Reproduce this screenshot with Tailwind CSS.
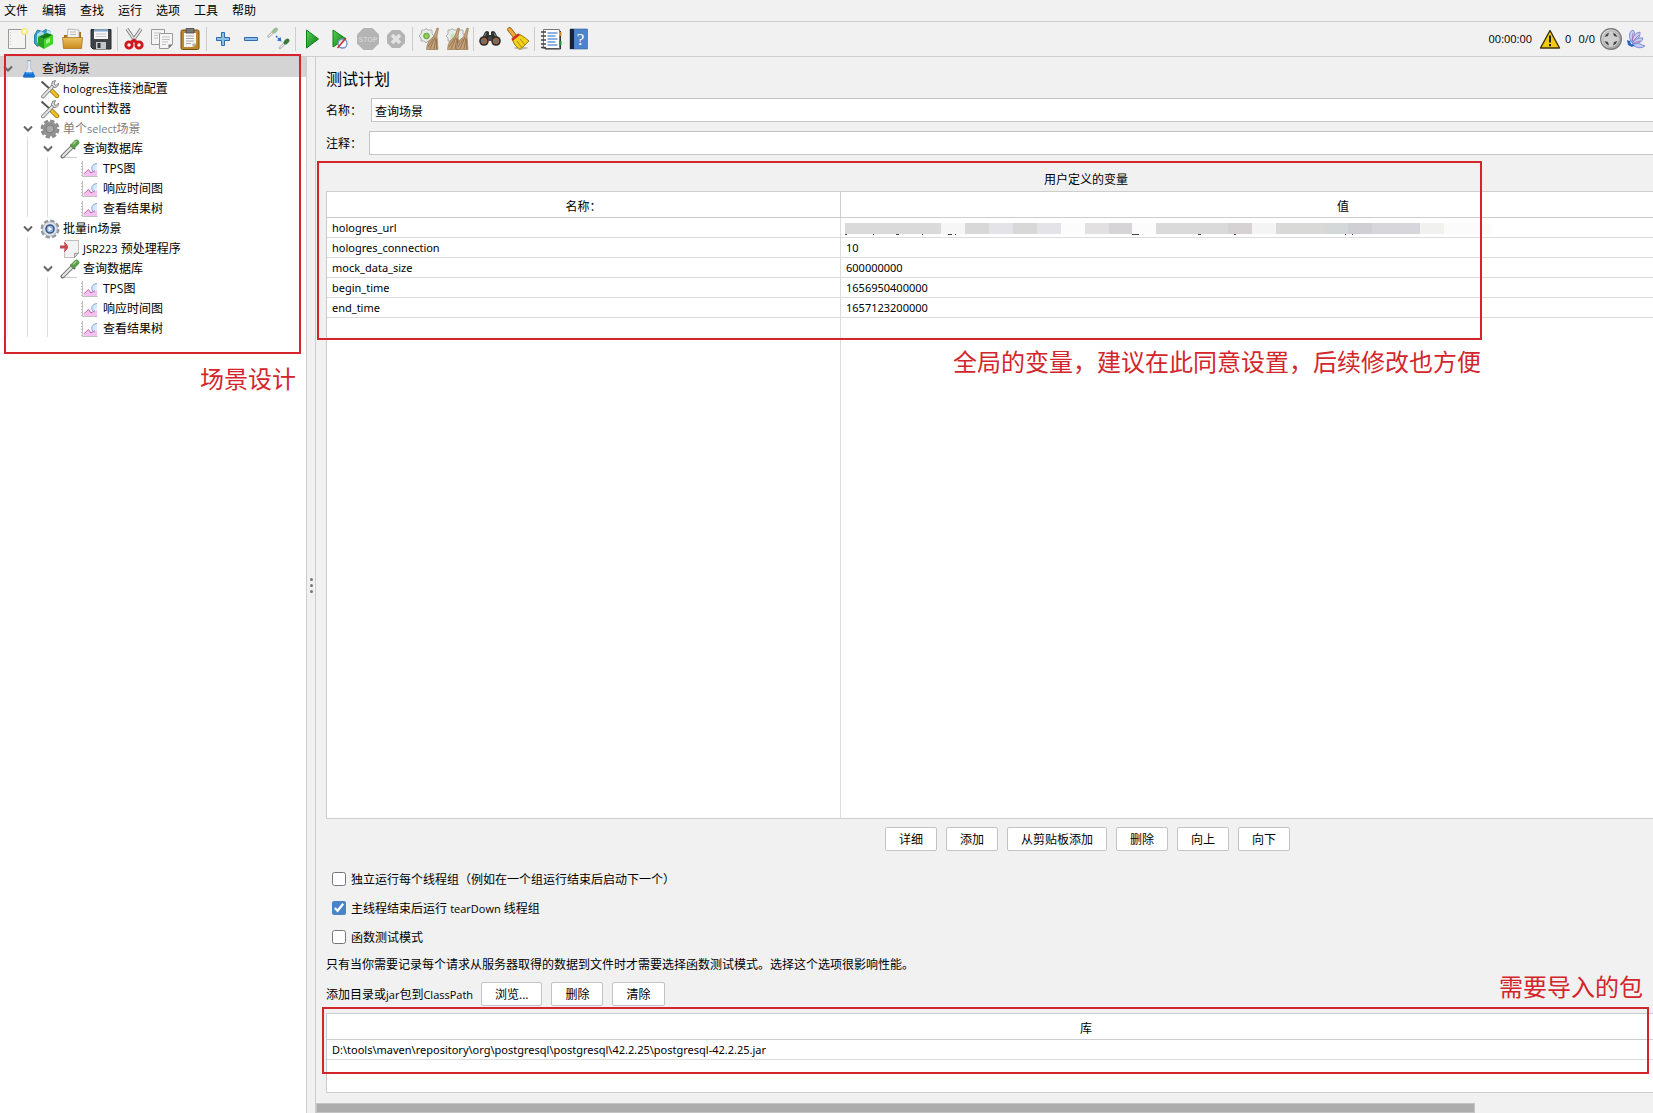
<!DOCTYPE html>
<html lang="zh-CN">
<head>
  <meta charset="UTF-8" />
  <title>查询场景</title>
  <script src="https://cdn.jsdelivr.net/npm/@tailwindcss/browser@4"></script>
</head>
<body class="flex flex-col h-screen overflow-hidden bg-[#f1f1f1] text-black text-[12px] leading-5 font-['Open_Sans','Noto_Sans_CJK_SC',sans-serif]">

  <!-- Icon sprite -->
  <svg class="absolute size-0">
    <defs>
      <linearGradient id="g-green" x1="0" y1="0" x2="1" y2="1"><stop offset="0" stop-color="#5fd05a" /><stop offset="1" stop-color="#067a0b" /></linearGradient>
      <linearGradient id="g-steel" x1="0" y1="0" x2="1" y2="1"><stop offset="0" stop-color="#f4f4f4" /><stop offset="1" stop-color="#8f8f8f" /></linearGradient>
      <linearGradient id="g-gold" x1="0" y1="0" x2="0" y2="1"><stop offset="0" stop-color="#f0c264" /><stop offset="1" stop-color="#c88a1c" /></linearGradient>
    </defs>
    <symbol id="i-chevron" viewBox="0 0 10 8"><path d="M1 1.500 5 5.500 9 1.500" fill="none" stroke="#666" stroke-width="2" /></symbol>
    <symbol id="i-flask" viewBox="0 0 20 20">
      <path d="M8.500 2v7L4 17q0 1.500 1.500 1.500h9q1.500 0 1.500-1.500L11.500 9V2z" fill="#e2e9f1" stroke="#b4c0cc" stroke-width=".8" />
      <path d="M6 13h8l2 4q0 1.500-1.500 1.500h-9Q4 18.500 4 17z" fill="#1b6fd0" /><path d="M7 13h6l.5 1.500h-7z" fill="#5ea4ec" /><path d="M8 1.500h4" stroke="#9aa" />
    </symbol>
    <symbol id="i-tools" viewBox="0 0 20 20">
      <path d="m1.500 2.500 9 8" stroke="#555" stroke-width="2" /><path d="m11 11 6 6" stroke="#8f6d00" stroke-width="4.400" stroke-linecap="round" /><path d="m11 11 6 6" stroke="#f0c020" stroke-width="3" stroke-linecap="round" />
      <path d="M3 17.500 12.500 7.500" stroke="#777" stroke-width="3.600" stroke-linecap="round" /><path d="M3 17.500 12.500 7.500" stroke="#e4e4e4" stroke-width="2" stroke-linecap="round" />
      <path d="M15.500 1.500q-4 0-4 4l2.500 3q4.500 0 4.500-4.500L16 6.500 14 5z" fill="#ddd" stroke="#777" stroke-width=".9" />
    </symbol>
    <symbol id="i-gear-off" viewBox="0 0 20 20">
      <circle cx="10" cy="10" r="8" fill="none" stroke="#8c8c8c" stroke-width="3" stroke-dasharray="4.200 2.080" /><circle cx="10" cy="10" r="7.500" fill="#929292" /><circle cx="10" cy="10" r="4" fill="#a9a9a9" stroke="#7c7c7c" />
    </symbol>
    <symbol id="i-gear" viewBox="0 0 20 20">
      <circle cx="10" cy="10" r="8" fill="none" stroke="#8e959d" stroke-width="3" stroke-dasharray="4.200 2.080" /><circle cx="10" cy="10" r="7.300" fill="#dfe3e7" stroke="#a5abb2" stroke-width=".8" /><circle cx="10" cy="10" r="4" fill="#8fb6ea" stroke="#3d5680" stroke-width="1.600" /><path d="M8.500 7.500v5l3.500-2.500z" fill="#fff" />
    </symbol>
    <symbol id="i-pipette" viewBox="0 0 20 20">
      <path d="M2 18.500h15" stroke="#ccc" /><path d="M2.500 17.500 12 8" stroke="#777" stroke-width="4" stroke-linecap="round" /><path d="M3 17 12 8" stroke="#e6e6e6" stroke-width="2.200" stroke-linecap="round" />
      <path d="m10.500 5.500 4.500 4.500" stroke="#555" stroke-width="2" /><path d="m13.500 6.500 3-3" stroke="#5a9e4a" stroke-width="5.500" stroke-linecap="round" /><path d="m13.500 5 2.500-2.500" stroke="#9cd48a" stroke-width="1.500" stroke-linecap="round" />
    </symbol>
    <symbol id="i-graph" viewBox="0 0 20 20">
      <path d="M2.500 2v15.500h15" fill="none" stroke="#c0c0c0" /><path d="M1.500 4v13" stroke="#bbb" stroke-dasharray="1 2" />
      <path d="m3.500 16 5-5 2.500 3 6-3v6h-13z" fill="#f4c0f0" /><path d="m3.500 15 5-4.500 2.500 3.500 4-2.500" fill="none" stroke="#c65aa6" /><path d="M17 4.500q-4 0-5 3t1 4.500l4-2z" fill="#d6e8ff" /><path d="M17 4.500q-4 0-5 3t1 4.500l2 1" fill="none" stroke="#86a8de" />
    </symbol>
    <symbol id="i-pre" viewBox="0 0 20 20">
      <path d="M5 1.500h13.500V14l-4 4.500H4.500z" fill="#f3f3f3" stroke="#b0b0b0" stroke-width=".8" /><path d="m18.500 14-4 4.500v-4z" fill="#ddd" stroke="#888" stroke-width=".8" /><path d="M0 8h6" stroke="#c9444e" stroke-width="3" /><path d="M4.500 3.500Q10.500 8 4.500 12.500 7 8 4.500 3.500z" fill="#c9444e" stroke="#c9444e" />
    </symbol>
    <symbol id="i-new" viewBox="0 0 24 24">
      <path d="M3.500 2.500h17v19h-17z" fill="#f4f4f2" stroke="#999" /><path d="M5.500 5v15" stroke="#ccc" stroke-dasharray="1 2" /><circle cx="19.500" cy="4.500" r="3.600" fill="#f7ea7e" /><circle cx="19.500" cy="4.500" r="1.700" fill="#fffce0" />
    </symbol>
    <symbol id="i-template" viewBox="0 0 24 24">
      <path d="m1.500 8 3-5 5 1.500 3-2 5 2-2 7-11 8-3-3z" fill="#3d9bc4" stroke="#19719a" stroke-width=".8" /><path d="m4 7 4-3 3 2-1 7-6 3z" fill="#a8dcf0" /><path d="m14 3 4 1.500-1 4-4 1z" fill="#b9e7f5" />
      <path d="m5 10 6 2v10l-6-3.500z" fill="#26a31d" /><path d="m11 12 9-4v9l-9 5z" fill="#49d32d" /><path d="m5 10 9-4 6 2-9 4z" fill="#167c14" /><path d="m13 13 4-2v4l-4 2z" fill="#a5ee92" />
    </symbol>
    <symbol id="i-open" viewBox="0 0 24 24">
      <path d="M3 8h6l1-3h10v14H3z" fill="#a66b1c" /><path d="m7 2 11 1v9H6z" fill="#f4f4f4" stroke="#aaa" stroke-width=".8" /><path d="M9 5h6M9 7.500h6" stroke="#bbb" /><path d="M1.500 10.500h20l-1 11h-18z" fill="url(#g-gold)" stroke="#a8761d" stroke-width=".8" />
    </symbol>
    <symbol id="i-save" viewBox="0 0 24 24">
      <path d="M2 2.500h20v19.500H4L2 20z" fill="#3f4347" stroke="#292c2f" /><path d="M5 2.500h14V12H5z" fill="#f5f5f5" /><path d="M5 2.500h14v2H5z" fill="#80a9cf" /><path d="M7 7h10M7 9.500h10" stroke="#c5c5c5" /><path d="M7 15h10v7H7z" fill="#c5c8ca" /><path d="M8.500 16h3v5h-3z" fill="#34383b" />
    </symbol>
    <symbol id="i-cut" viewBox="0 0 24 24">
      <path d="m5 2 9 13M19 2l-9 13" stroke="#777" stroke-width="3.200" /><path d="m5 2 9 13M19 2l-9 13" stroke="#e2e2e2" stroke-width="1.700" /><circle cx="7" cy="18" r="3.200" fill="#f1f1f1" stroke="#d0151b" stroke-width="2.800" /><circle cx="17" cy="18" r="3.200" fill="#f1f1f1" stroke="#d0151b" stroke-width="2.800" /><path d="m9 16 3-3 3 3" fill="none" stroke="#d0151b" stroke-width="2.500" />
    </symbol>
    <symbol id="i-copy" viewBox="0 0 24 24">
      <g fill="#f5f5f5" stroke="#999"><path d="M1.500 2.500h13v15h-13z" /><path d="M9.500 6.500h13v11l-4 4h-9z" /></g><path d="M4 6h7M4 8.500h4M4 11h4M12 10h8M12 12.500h8M12 15h6M12 17.500h4" stroke="#c2c2c2" /><path d="M22.500 17.500h-4v4z" fill="#777" />
    </symbol>
    <symbol id="i-paste" viewBox="0 0 24 24">
      <rect x="3" y="3" width="18" height="19.500" rx="1.500" fill="#bd8632" stroke="#79500e" /><path d="M6 6h12v11l-3 3H6z" fill="#f7f7f7" /><path d="M8 1.500h8V6H8z" fill="#777" stroke="#444" stroke-width=".8" /><path d="M8 9h8M8 11.500h8M8 14h8M8 16.500h5" stroke="#aaa" /><path d="M18 16.500h-3.500V20z" fill="#aaa" />
    </symbol>
    <symbol id="i-plus" viewBox="0 0 24 24"><path d="M10.500 5.500h3v5h5v3h-5v5h-3v-5h-5v-3h5z" fill="#8ebcec" stroke="#3169ad" /></symbol>
    <symbol id="i-minus" viewBox="0 0 24 24"><path d="M5.500 10.500h13v3h-13z" fill="#8ebcec" stroke="#3169ad" /></symbol>
    <symbol id="i-toggle" viewBox="0 0 24 24">
      <path d="m1.500 9.500 5-5M13 21l5-5" stroke="#bbb" stroke-width="2.600" stroke-linecap="round" /><path d="m2 9 4.500-4.500M13.500 20.500 18 16" stroke="#f5f5f5" /><path d="m7 4.500 2-2" stroke="#9cbf96" stroke-width="4" stroke-linecap="round" /><path d="m18.500 15.500 2-2" stroke="#39773a" stroke-width="4" stroke-linecap="round" /><path d="m9 9 4 4" stroke="#2b6fce" stroke-width="1.500" stroke-dasharray="2 1" /><path d="m14.500 14.500-4.500-1 3.500-3.500z" fill="#2b6fce" />
    </symbol>
    <symbol id="i-start" viewBox="0 0 24 24"><path d="M6.500 3v18L18.500 12z" fill="url(#g-green)" stroke="#0b8310" /></symbol>
    <symbol id="i-start-np" viewBox="0 0 24 24"><path d="M5 3v17l12.500-8.500z" fill="url(#g-green)" stroke="#0b8310" /><circle cx="14.500" cy="16.500" r="4.500" fill="#fff" fill-opacity=".8" stroke="#6b91d3" stroke-width="1.300" /><path d="m9.500 21 8.500-10" stroke="#d02a2a" stroke-width="1.500" /></symbol>
    <symbol id="i-shutdown" viewBox="0 0 24 24"><path d="M8 3h8l5 5v8l-5 5H8l-5-5V8z" fill="#b4b4b4" /><path d="m8 8 8 8m0-8-8 8" stroke="#e2e2e2" stroke-width="3.600" /></symbol>
    <symbol id="i-broom" viewBox="0 0 24 24"><path d="m20 1 1.500.5L20 9l1 13.500H9.500q.5-9 7-12.500z" fill="#c3a37d" stroke="#8d6b45" stroke-width=".6" /><path d="m18 10-5 12m6-11-2 11m-1-10-5 8m8.500-8V22" stroke="#8d6b45" stroke-width=".8" /></symbol>
    <symbol id="i-clear" viewBox="0 0 24 24">
      <path d="M5 3h3l1-1.500 2 1.500h4v4l2 2-2 2v3h-4l-2 2-2-2H4v-3l-2-2 2-2z" fill="#e8ebe8" stroke="#aab0aa" /><circle cx="9.500" cy="9" r="2.800" fill="#8fcc5b" stroke="#5d9c35" /><use href="#i-broom" width="24" height="24" />
    </symbol>
    <symbol id="i-clear-all" viewBox="0 0 24 24">
      <path d="M3 3h3l1-1.500 2 1.500h9v4l2 2-2 2v3H9l-2 2-2-2H3v-3L1 9l2-2z" fill="#e8ebe8" stroke="#aab0aa" /><circle cx="8" cy="9" r="2.500" fill="#c8e4b4" /><use href="#i-broom" x="-7" width="24" height="24" /><use href="#i-broom" x="2" width="24" height="24" />
    </symbol>
    <symbol id="i-search" viewBox="0 0 24 24">
      <path d="m3 13 4-8q2-2 4 0v3h2V5q2-2 4 0l4 8z" fill="#333" /><path d="m5 12 3-6M19 12l-3-6" stroke="#888" /><circle cx="6" cy="14" r="4.800" fill="#2b2b2b" /><circle cx="18" cy="14" r="4.800" fill="#2b2b2b" /><circle cx="6" cy="14" r="2.800" fill="#6d6d6d" stroke="#bb6332" /><circle cx="18" cy="14" r="2.800" fill="#6d6d6d" stroke="#bb6332" /><path d="M10 10h4v4h-4z" fill="#444" />
    </symbol>
    <symbol id="i-reset" viewBox="0 0 24 24">
      <ellipse cx="15" cy="21" rx="7" ry="1.500" fill="#bbb" /><path d="m3.500 2.500 5.500 7" stroke="#946006" stroke-width="4.600" stroke-linecap="round" /><path d="m3.500 2.500 5.500 7" stroke="#eda83e" stroke-width="3" stroke-linecap="round" /><path d="m6 12 7-5q7 4 10 7L14 22.500Q8 19 6 12z" fill="#f1d31e" stroke="#9b7c00" /><path d="m5.500 11.500 6.500-5 2 1.500-7.500 6z" fill="#cf2b1d" /><path d="m11 14 5 7m-2-9 5 6" stroke="#b48e00" />
    </symbol>
    <symbol id="i-functions" viewBox="0 0 24 24">
      <path d="M4.500 2.500h16v19h-16z" fill="#fff" stroke="#777" /><path d="M21.500 4v18H6" fill="none" stroke="#333" /><path d="M2 5h5M2 9h5M2 13h5M2 17h5M2 20.500h5" stroke="#444" stroke-width="1.300" /><path d="M8.500 6h10M8.500 9h8M8.500 12h10M8.500 15h8M8.500 18h10" stroke="#1d67c0" stroke-width="1.200" /><path d="M20 5h2.500v4H20z" fill="#d78a22" /><path d="M20 14h2.500v4H20z" fill="#1f9a38" />
    </symbol>
    <symbol id="i-warning" viewBox="0 0 24 24"><path d="M12 3.500 21.500 21h-19z" fill="#f2c811" stroke="#3c3208" stroke-width="1.400" stroke-linejoin="round" /><path d="M12 8.500v7M12 17v2.300" stroke="#222" stroke-width="2" /></symbol>
    <symbol id="i-threads" viewBox="0 0 24 24"><circle cx="12" cy="12" r="10.400" fill="url(#g-steel)" stroke="#777" stroke-width="1.200" /><circle cx="12" cy="12" r="8.200" fill="#cfcfcf" stroke="#a2a2a2" stroke-width=".6" /><path d="M10 5.500A7 7 0 0 0 5.500 10L9 9zM14 5.500a7 7 0 0 1 4.500 4.500L15 9zM10 18.500A7 7 0 0 1 5.500 14L9 15zM14 18.500a7 7 0 0 0 4.500-4.500L15 15z" fill="#444" /></symbol>
    <symbol id="i-feather" viewBox="0 0 24 24">
      <g fill="#c4cdf0" stroke="#6b7fd0" stroke-width=".8"><path d="M6 15Q2 5 8 3q4 4-1 12z" /><path d="M7 15q1-9 8-10 1 6-7 11z" /><path d="M7 16q5-6 11-5 0 5-10 6z" /><path d="M7 17q7-2 13 2-5 4-13-1z" /></g><path d="M7 14 8 6m0 8 6-6m-6 8 8-2" stroke="#b06aa8" stroke-width=".8" /><path d="m2 13 3 1 1 3 4 1-3 2-4-2z" fill="#2563c9" />
    </symbol>
  </svg>

  <!-- Menu bar -->
  <nav class="flex items-center gap-3.5 h-[22px] px-1 pt-px border-b border-[#cdcdcd] shrink-0">
    <a href="#">文件</a>
    <a href="#">编辑</a>
    <a href="#">查找</a>
    <a href="#">运行</a>
    <a href="#">选项</a>
    <a href="#">工具</a>
    <a href="#">帮助</a>
  </nav>

  <!-- Toolbar -->
  <header class="flex items-center h-[35px] pl-[3px] pr-1 border-b border-[#cdcdcd] shrink-0">
    <div class="flex">
      <button class="w-7 px-0.5" aria-label="新建"><svg class="size-6"><use href="#i-new" /></svg></button>
      <button class="w-7 px-0.5" aria-label="模板"><svg class="size-6"><use href="#i-template" /></svg></button>
      <button class="w-7 px-0.5" aria-label="打开"><svg class="size-6"><use href="#i-open" /></svg></button>
      <button class="w-7 px-0.5" aria-label="保存"><svg class="size-6"><use href="#i-save" /></svg></button>
      <span class="w-px mx-0.5 bg-[#cdcdcd]"></span>
      <button class="w-7 px-0.5" aria-label="剪切"><svg class="size-6"><use href="#i-cut" /></svg></button>
      <button class="w-7 px-0.5" aria-label="复制"><svg class="size-6"><use href="#i-copy" /></svg></button>
      <button class="w-7 px-0.5" aria-label="粘贴"><svg class="size-6"><use href="#i-paste" /></svg></button>
      <span class="w-px mx-0.5 bg-[#cdcdcd]"></span>
      <button class="w-7 px-0.5" aria-label="展开"><svg class="size-6"><use href="#i-plus" /></svg></button>
      <button class="w-7 px-0.5" aria-label="折叠"><svg class="size-6"><use href="#i-minus" /></svg></button>
      <button class="w-7 px-0.5" aria-label="切换"><svg class="size-6"><use href="#i-toggle" /></svg></button>
      <span class="w-px mx-0.5 bg-[#cdcdcd]"></span>
      <button class="w-7 px-0.5" aria-label="启动"><svg class="size-6"><use href="#i-start" /></svg></button>
      <button class="w-7 px-0.5" aria-label="不停顿启动"><svg class="size-6"><use href="#i-start-np" /></svg></button>
      <button class="w-7 px-0.5" aria-label="停止" disabled><svg class="size-6" viewBox="0 0 24 24"><path d="M7.500 1h9L23 7.500v9L16.500 23h-9L1 16.500v-9z" fill="#b4b4b4" /><text x="12" y="14.500" font-size="7" font-weight="700" text-anchor="middle" fill="#d2d2d2" font-family="Liberation Sans">STOP</text></svg></button>
      <button class="w-7 px-0.5" aria-label="关闭" disabled><svg class="size-6"><use href="#i-shutdown" /></svg></button>
      <span class="w-px mx-0.5 bg-[#cdcdcd]"></span>
      <button class="w-7 px-0.5" aria-label="清除"><svg class="size-6"><use href="#i-clear" /></svg></button>
      <button class="w-7 px-0.5" aria-label="清除全部"><svg class="size-6"><use href="#i-clear-all" /></svg></button>
      <span class="w-px mx-0.5 bg-[#cdcdcd]"></span>
      <button class="w-7 px-0.5" aria-label="查找"><svg class="size-6"><use href="#i-search" /></svg></button>
      <button class="w-7 px-0.5" aria-label="重置搜索"><svg class="size-6"><use href="#i-reset" /></svg></button>
      <span class="w-px mx-0.5 bg-[#cdcdcd]"></span>
      <button class="w-7 px-0.5" aria-label="函数助手"><svg class="size-6"><use href="#i-functions" /></svg></button>
      <button class="w-7 px-0.5" aria-label="帮助"><svg class="size-6" viewBox="0 0 24 24"><path d="M3 2h17.500v20H3z" fill="#4a84cd" stroke="#335e96" stroke-width=".6" /><path d="M3 2h4v20H3z" fill="#16233c" /><text x="13.500" y="17.500" font-size="17" text-anchor="middle" fill="#fff" font-family="Liberation Serif">?</text></svg></button>
    </div>
    <div class="flex items-center ml-auto text-[11px]">
      <span class="mr-1.5">00:00:00</span>
      <button aria-label="日志"><svg class="size-6"><use href="#i-warning" /></svg></button>
      <span class="ml-[3px] mr-[7px]">0</span>
      <span class="mr-1">0/0</span>
      <svg class="size-6"><use href="#i-threads" /></svg>
      <svg class="size-6 ml-0.5"><use href="#i-feather" /></svg>
    </div>
  </header>

  <div class="flex flex-1 min-h-0">

    <!-- Test tree -->
    <aside class="relative w-[307px] shrink-0 bg-white border-r border-[#cdcdcd]">
      <ul>
        <li>
          <div class="flex items-center h-5 pt-[3px] pl-[3px] bg-[#d4d4d4]"><svg class="w-2.5 h-2 mr-1.5"><use href="#i-chevron" /></svg><svg class="size-5 mr-[3px]"><use href="#i-flask" /></svg>查询场景</div>
          <ul class="ml-[7px] border-l border-[#f0f0f0]">
            <li class="flex items-center h-5 pt-[3px] pl-8"><svg class="size-5 mr-[3px]"><use href="#i-tools" /></svg><span class="text-[11px]">hologres</span>连接池配置</li>
            <li class="flex items-center h-5 pt-[3px] pl-8"><svg class="size-5 mr-[3px]"><use href="#i-tools" /></svg>count计数器</li>
            <li>
              <div class="flex items-center h-5 pt-[3px] pl-[15px] text-[#808080]"><svg class="w-2.5 h-2 mr-[7px]"><use href="#i-chevron" /></svg><svg class="size-5 mr-[3px]"><use href="#i-gear-off" /></svg>单个<span class="text-[11px]">select</span>场景</div>
              <ul class="ml-[19px] border-l border-[#dcdcdc]">
                <li>
                  <div class="flex items-center h-5 pt-[3px] pl-[15px]"><svg class="w-2.5 h-2 mr-[7px]"><use href="#i-chevron" /></svg><svg class="size-5 mr-[3px]"><use href="#i-pipette" /></svg>查询数据库</div>
                  <ul class="ml-[19px] border-l border-[#dcdcdc]">
                    <li class="flex items-center h-5 pt-[3px] pl-8"><svg class="size-5 mr-[3px]"><use href="#i-graph" /></svg>TPS图</li>
                    <li class="flex items-center h-5 pt-[3px] pl-8"><svg class="size-5 mr-[3px]"><use href="#i-graph" /></svg>响应时间图</li>
                    <li class="flex items-center h-5 pt-[3px] pl-8"><svg class="size-5 mr-[3px]"><use href="#i-graph" /></svg>查看结果树</li>
                  </ul>
                </li>
              </ul>
            </li>
            <li>
              <div class="flex items-center h-5 pt-[3px] pl-[15px]"><svg class="w-2.5 h-2 mr-[7px]"><use href="#i-chevron" /></svg><svg class="size-5 mr-[3px]"><use href="#i-gear" /></svg>批量in场景</div>
              <ul class="ml-[19px] border-l border-[#dcdcdc]">
                <li class="flex items-center gap-[3px] h-5 pt-[3px] pl-8"><svg class="size-5"><use href="#i-pre" /></svg><span class="text-[11px]">JSR223</span>预处理程序</li>
                <li>
                  <div class="flex items-center h-5 pt-[3px] pl-[15px]"><svg class="w-2.5 h-2 mr-[7px]"><use href="#i-chevron" /></svg><svg class="size-5 mr-[3px]"><use href="#i-pipette" /></svg>查询数据库</div>
                  <ul class="ml-[19px] border-l border-[#dcdcdc]">
                    <li class="flex items-center h-5 pt-[3px] pl-8"><svg class="size-5 mr-[3px]"><use href="#i-graph" /></svg>TPS图</li>
                    <li class="flex items-center h-5 pt-[3px] pl-8"><svg class="size-5 mr-[3px]"><use href="#i-graph" /></svg>响应时间图</li>
                    <li class="flex items-center h-5 pt-[3px] pl-8"><svg class="size-5 mr-[3px]"><use href="#i-graph" /></svg>查看结果树</li>
                  </ul>
                </li>
              </ul>
            </li>
          </ul>
        </li>
      </ul>
      <!-- Annotation -->
      <div class="absolute left-1 right-[5px] -top-[3px] h-[300px] border-2 border-[#d3262c]"></div>
      <p class="absolute right-2.5 top-[306px] text-2xl text-[#d3262c]">场景设计</p>
    </aside>

    <!-- Splitter -->
    <div class="flex flex-col items-center justify-center gap-[3px] w-2 shrink-0">
      <span class="size-[3px] rounded-full bg-[#777]"></span>
      <span class="size-[3px] rounded-full bg-[#777]"></span>
      <span class="size-[3px] rounded-full bg-[#777]"></span>
    </div>

    <main class="relative flex flex-col flex-1 min-w-0 border-l border-[#cdcdcd]">
      <div class="flex-1 min-h-0 overflow-hidden">
        <div class="flex flex-col h-full min-w-[1544px] pl-2.5 pr-3.5 pt-2.5 pb-2.5">
          <h1 class="h-6 text-base leading-6">测试计划</h1>
          <div class="flex items-center h-6 mt-[7px]">
            <label for="plan-name" class="w-[45px] pt-0.5">名称：</label>
            <input type="text" id="plan-name" value="查询场景" class="flex-1 h-6 px-[3px] pt-0.5 bg-white border border-[#c4c4c4]" />
          </div>
          <div class="flex items-center h-6 mt-[9px]">
            <label for="plan-comment" class="w-[43px] pt-0.5">注释：</label>
            <input type="text" id="plan-comment" class="flex-1 h-6 px-[3px] pt-0.5 bg-white border border-[#c4c4c4]" />
          </div>

          <!-- User defined variables -->
          <section class="relative flex flex-col flex-1 min-h-0 mt-1.5">
            <h2 class="h-[30px] pt-[9px] text-center">用户定义的变量</h2>
            <div class="flex flex-col flex-1 min-h-0 bg-white border border-[#cdcdcd]">
              <table class="w-full table-fixed border-separate border-spacing-0 text-left">
                <thead>
                  <tr class="h-[26px]">
                    <th class="w-[514px] p-0 pt-1 font-normal text-center border-b border-r border-[#cdcdcd]">名称：</th>
                    <th class="p-0 pt-1 font-normal text-center border-b border-[#cdcdcd]">值</th>
                  </tr>
                </thead>
                <tbody class="text-[11px] leading-[19px] font-['Noto_Sans','Noto_Sans_CJK_SC',sans-serif]">
                  <tr>
                    <td class="py-0 px-[5px] border-b border-r border-[#dcdcdc]">hologres_url</td>
                    <td class="py-0 pt-0.5 px-1 border-b border-[#dcdcdc]">
                      <svg class="w-[650px] h-3" viewBox="0 0 650 12" aria-label="已隐藏">
                        <path fill="#dadada" d="M0 0h96v11H0z" /><path fill="#f7f6f7" d="M96 0h24v11H96z" />
                        <path fill="#d9d8d9" d="M120 0h24v11h-24zM168 0h24v11h-24z" /><path fill="#e4e3e7" d="M144 0h24v11h-24zM192 0h24v11h-24z" />
                        <path fill="#fcfcfc" d="M216 0h24v11h-24zM287 0h24v11h-24z" /><path fill="#e2e0e1" d="M240 0h24v11h-24z" /><path fill="#d7d4d7" d="M264 0h23v11h-23z" />
                        <path fill="#dadada" d="M311 0h72v11h-72z" /><path fill="#d6d2d4" d="M383 0h24v11h-24z" /><path fill="#f4f4f5" d="M407 0h24v11h-24z" />
                        <path fill="#d9d9d7" d="M431 0h48v11h-48z" /><path fill="#d5d8d9" d="M479 0h24v11h-24z" /><path fill="#cfcfd4" d="M503 0h24v11h-24z" />
                        <path fill="#d7d6da" d="M527 0h48v11h-48z" /><path fill="#f1f1ef" d="M575 0h24v11h-24z" /><path fill="#fbfbfb" d="M599 0h48v11h-48z" />
                        <path fill="#444" d="M0 11h2v1H0zM28 11h1v1h-1zM51 11h3v1h-3zM77 11h1v1h-1zM103 11h4v1h-4zM110 11h1v1h-1zM287 11h7v1h-7zM353 11h3v1h-3zM389 11h2v1h-2zM500 11h1v1h-1zM507 11h1v1h-1z" />
                      </svg>
                    </td>
                  </tr>
                  <tr>
                    <td class="py-0 px-[5px] border-b border-r border-[#dcdcdc]">hologres_connection</td>
                    <td class="py-0 px-[5px] border-b border-[#dcdcdc]">10</td>
                  </tr>
                  <tr>
                    <td class="py-0 px-[5px] border-b border-r border-[#dcdcdc]">mock_data_size</td>
                    <td class="py-0 px-[5px] border-b border-[#dcdcdc]">600000000</td>
                  </tr>
                  <tr>
                    <td class="py-0 px-[5px] border-b border-r border-[#dcdcdc]">begin_time</td>
                    <td class="py-0 px-[5px] border-b border-[#dcdcdc]">1656950400000</td>
                  </tr>
                  <tr>
                    <td class="py-0 px-[5px] border-b border-r border-[#dcdcdc]">end_time</td>
                    <td class="py-0 px-[5px] border-b border-[#dcdcdc]">1657123200000</td>
                  </tr>
                </tbody>
              </table>
              <div class="flex-1 w-[514px] border-r border-[#dcdcdc]"></div>
            </div>
            <!-- Annotation -->
            <div class="absolute -left-[9px] top-0 w-[1165px] h-[179px] border-2 border-[#d3262c]"></div>
            <p class="absolute left-[627px] top-[185px] text-2xl text-[#d3262c] whitespace-nowrap">全局的变量，建议在此同意设置，后续修改也方便</p>
          </section>

          <div class="flex justify-center gap-[9px] mt-2 mb-[13px] pl-[3px]">
            <button class="h-6 px-[13px] pt-0.5 leading-5 bg-white border border-[#c4c4c4] rounded-xs">详细</button>
            <button class="h-6 px-[13px] pt-0.5 leading-5 bg-white border border-[#c4c4c4] rounded-xs">添加</button>
            <button class="h-6 px-[13px] pt-0.5 leading-5 bg-white border border-[#c4c4c4] rounded-xs">从剪贴板添加</button>
            <button class="h-6 px-[13px] pt-0.5 leading-5 bg-white border border-[#c4c4c4] rounded-xs">删除</button>
            <button class="h-6 px-[13px] pt-0.5 leading-5 bg-white border border-[#c4c4c4] rounded-xs">向上</button>
            <button class="h-6 px-[13px] pt-0.5 leading-5 bg-white border border-[#c4c4c4] rounded-xs">向下</button>
          </div>

          <div class="flex items-center gap-[5px] h-[29px] pl-1.5">
            <input type="checkbox" id="serialize" class="size-3.5" />
            <label for="serialize" class="pt-0.5">独立运行每个线程组（例如在一个组运行结束后启动下一个）</label>
          </div>
          <div class="flex items-center gap-[5px] h-[29px] pl-1.5">
            <input type="checkbox" id="teardown" class="size-3.5 accent-[#4a84c8]" checked />
            <label for="teardown" class="pt-0.5">主线程结束后运行 <span class="text-[11px]">tearDown</span> 线程组</label>
          </div>
          <div class="flex items-center gap-[5px] h-[29px] pl-1.5">
            <input type="checkbox" id="functional" class="size-3.5" />
            <label for="functional" class="pt-0.5">函数测试模式</label>
          </div>
          <p class="h-[31px] pt-1">只有当你需要记录每个请求从服务器取得的数据到文件时才需要选择函数测试模式。选择这个选项很影响性能。</p>

          <!-- Classpath -->
          <div class="flex items-center gap-[9px]">
            <span class="w-[146px] pt-0.5 whitespace-nowrap">添加目录或<span class="text-[11px]">jar</span>包到<span class="text-[11px]">ClassPath</span></span>
            <button class="h-6 px-[13px] pt-0.5 leading-5 bg-white border border-[#c4c4c4] rounded-xs">浏览...</button>
            <button class="h-6 px-[13px] pt-0.5 leading-5 bg-white border border-[#c4c4c4] rounded-xs">删除</button>
            <button class="h-6 px-[13px] pt-0.5 leading-5 bg-white border border-[#c4c4c4] rounded-xs">清除</button>
          </div>
          <div class="h-20 mt-[7px] bg-white border border-[#cdcdcd] shrink-0">
            <table class="w-full border-separate border-spacing-0 text-left">
              <thead>
                <tr class="h-[26px]"><th class="p-0 pt-1 font-normal text-center border-b border-[#cdcdcd]">库</th></tr>
              </thead>
              <tbody class="text-[11px] leading-[19px] font-['Noto_Sans','Noto_Sans_CJK_SC',sans-serif]">
                <tr><td class="py-0 px-[5px] border-b border-[#dcdcdc]">D:\tools\maven\repository\org\postgresql\postgresql\42.2.25\postgresql-42.2.25.jar</td></tr>
              </tbody>
            </table>
          </div>
        </div>
      </div>

      <!-- Horizontal scrollbar -->
      <div class="h-2.5 shrink-0">
        <div class="w-13/15 h-full bg-[#adadad] border border-[#c4c4c4]"></div>
      </div>

      <!-- Annotation -->
      <p class="absolute right-2.5 bottom-[116px] text-2xl leading-5 text-[#d3262c]">需要导入的包</p>
      <div class="absolute left-1.5 right-1 bottom-[39px] h-[67px] border-2 border-[#d3262c]"></div>
    </main>
  </div>

</body>
</html>
